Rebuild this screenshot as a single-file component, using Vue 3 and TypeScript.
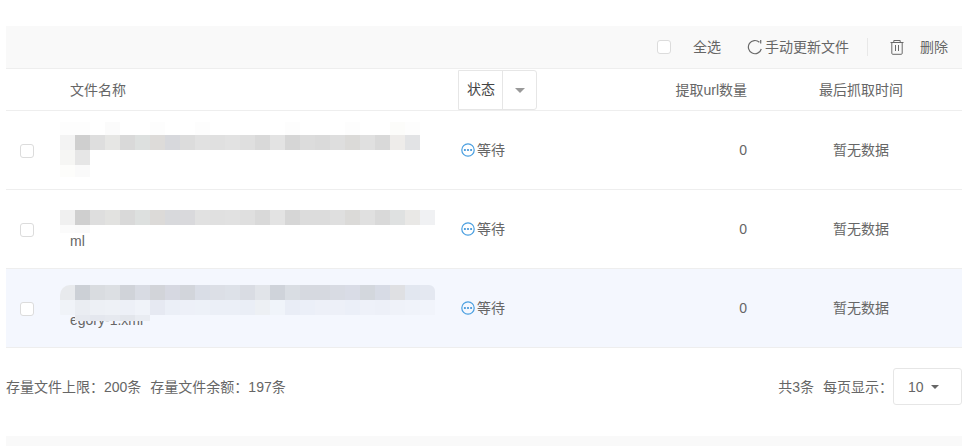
<script setup lang="ts">
interface MosaicRow { h: number; cells: string[] }
interface FileRow { id: number; tail: string; active: boolean; mosaic: MosaicRow[]; top: number }

const g = (s: string): string[] => s.split(' ').map((c) => (c === '-' ? 'transparent' : '#' + c))

const rows: FileRow[] = [
  {
    id: 1, tail: '', active: false, top: 11,
    mosaic: [
      { h: 13, cells: g('fdfdfd fdfdfd - fbfbfb - - fdfdfd - - fdfdfd - - - - - fdfdfd - - - fdfdfd - - fcfcfa fdfdfd') },
      { h: 15, cells: g('f3f3f3 cfcfcf dedede e6e6e4 d9d9d9 dde0df dddbd9 d7d8dc dcdcdc e1e1e1 e0e0e0 e2e2e2 dfdfdf d9d9d9 e3e3e3 d6d6d6 dcdcdc dadada dedede dbdad8 e0e0e0 d9d9d9 eeecea e2e3e5') },
      { h: 15, cells: g('f6f6f4 e6e6e6') },
      { h: 12, cells: g('fdfdfb fafafa') },
    ],
  },
  {
    id: 2, tail: 'ml', active: false, top: 20,
    mosaic: [
      { h: 15, cells: g('f0f0f0 cfcfcf dedede e2e2e0 d9d9d9 dde0df dcdad8 d8d9dc d9d9dc e1e1e1 e0e0e0 e1e1e1 dfdfdf d9d9d9 e3e3e3 d6d6d6 dcdcdc dcdcdc dfdfdf dbdad8 e0e0e0 d9d9d9 dfe1e1 e9e8e6 f0f1f3') },
      { h: 8, cells: g('fbfbfb fafafa') },
    ],
  },
  {
    id: 3, tail: 'egory-1.xml', active: true, top: 16,
    mosaic: [
      { h: 15, cells: g('e8eaed ccd0d6 d9dce0 dcdfe3 d0d3d9 d8dbe3 d2d4d9 d6d8e1 d2d5db d9dde6 dcdfe6 dde1e8 d9dce3 e1e4e9 cfd3da d9dde3 d6d9e0 d6d9e0 d8dbe3 d9dce6 d3d7dd d7dbe5 dfe0e3 e2e7f0 e4e8f1') },
      { h: 15, cells: g('f0f3f8 eaedf2 edf0f5 eef1f6 edf0f7 f0f3f9 e6e9f2 ebeff7 edf0f8 edf1f8 ebeff7 ebeff7 eaeef6 edf0f4 f0f4fa e9edf6 ebeff8 edf0f8 edf0f8 ebeff8 eef1f9 edf0f8 eff2f9 f0f3fa f1f4fb') },
      { h: 6, cells: g('- e6e9ef e4e7ee e6e9ef e3e6ec e9ecf2') },
    ],
  },
]
</script>

<template>
  <div class="page">
    <div class="toolbar">
      <span class="checkbox"></span>
      <span class="select-all raised">全选</span>
      <svg class="refresh" width="16" height="16" viewBox="0 0 16 16" fill="none" stroke="#6a6a6a" stroke-width="1.2">
        <path d="M12.4 3.2A6.6 6.6 0 1 0 14.3 10" />
        <path d="M13.7 1v3.6" />
      </svg>
      <span class="update raised">手动更新文件</span>
      <span class="divider"></span>
      <svg class="trash" width="14" height="16" viewBox="0 0 14 16" fill="none" stroke="#6a6a6a" stroke-width="1">
        <path d="M.5 3.5h13M3.8 3.5V1.5h6.4v2M1.8 3.5v10.8a1 1 0 0 0 1 1h8.4a1 1 0 0 0 1-1V3.5M5.5 6v6M8.5 6v6" />
      </svg>
      <span class="delete raised">删除</span>
    </div>

    <div class="grid head">
      <div></div>
      <div class="raised">文件名称</div>
      <div class="status-head">
        <span class="status-label">状态</span>
        <span class="status-arrow"><i class="caret caret-light"></i></span>
      </div>
      <div class="count raised">提取url数量</div>
      <div class="time raised">最后抓取时间</div>
    </div>

    <div v-for="row in rows" :key="row.id" class="grid row" :class="{ active: row.active }">
      <div class="check-cell"><span class="checkbox"></span></div>
      <div class="name">
        <div class="name-line"></div>
        <div class="name-line">{{ row.tail }}</div>
        <div class="mosaic" :class="{ rounded: row.active }" :style="{ top: row.top + 'px' }">
          <div v-for="(m, i) in row.mosaic" :key="i" class="mosaic-row" :style="{ height: m.h + 'px' }">
            <span v-for="(c, j) in m.cells" :key="j" class="cell" :style="{ background: c }"></span>
          </div>
        </div>
      </div>
      <div class="state">
        <svg width="14" height="14" viewBox="0 0 14 14">
          <circle cx="7" cy="7" r="6.2" fill="none" stroke="#4a9fe0" stroke-width="1.2" />
          <circle cx="3.9" cy="7" r="1.1" fill="#3f94d8" />
          <circle cx="7" cy="7" r="1.1" fill="#3f94d8" />
          <circle cx="10.1" cy="7" r="1.1" fill="#3f94d8" />
        </svg>
        <span class="raised">等待</span>
      </div>
      <div class="count">0</div>
      <div class="time raised">暂无数据</div>
    </div>

    <div class="footer">
      <div class="quota raised">
        <span>存量文件上限：200条</span>
        <span>存量文件余额：197条</span>
      </div>
      <div class="pager">
        <span class="raised">共3条</span>
        <span class="per-page raised">每页显示：</span>
        <div class="page-size"><span>10</span><i class="caret"></i></div>
      </div>
    </div>
    <div class="band"></div>
  </div>
</template>

<style>
html, body { margin: 0; background: #fff; }
</style>

<style scoped>
.page {
  width: 956px;
  height: 446px;
  margin-left: 6px;
  padding-top: 26px;
  box-sizing: border-box;
  overflow: hidden;
  font-family: "Liberation Sans", "Noto Sans CJK SC", sans-serif;
  font-size: 14px;
  color: #666;
}
.raised { padding-bottom: 2px; }
.toolbar {
  height: 42px;
  background: #f9f9f9;
  border-bottom: 1px solid #eeeeee;
  display: flex;
  align-items: center;
  justify-content: flex-end;
  padding-right: 14px;
}
.checkbox {
  display: block;
  width: 14px;
  height: 14px;
  box-sizing: border-box;
  background: #fff;
  border: 1px solid #dcdcdc;
  border-radius: 3px;
}
.select-all { margin-left: 22px; }
.refresh { margin-left: 26px; }
.update { margin-left: 2px; }
.divider { width: 1px; height: 18px; background: #e8e8e8; margin-left: 18px; }
.trash { margin-left: 22px; }
.delete { margin-left: 16px; }
.grid {
  display: grid;
  grid-template-columns: 64px 388px 160px 142px 202px;
  align-items: center;
}
.head {
  height: 41px;
  border-bottom: 1px solid #eeeeee;
}
.status-head {
  display: flex;
  width: 79px;
  height: 40px;
  box-sizing: border-box;
  border: 1px solid #e6e6e6;
  border-radius: 0 3px 3px 0;
  align-self: start;
  margin-top: 1px;
  color: #444;
}
.status-label {
  width: 44px;
  box-sizing: border-box;
  padding-left: 8px;
  line-height: 36px;
  border-right: 1px solid #e6e6e6;
}
.status-arrow {
  flex: 1;
  display: flex;
  align-items: center;
  justify-content: center;
}
.caret {
  display: block;
  width: 0;
  height: 0;
  border-left: 4px solid transparent;
  border-right: 4px solid transparent;
  border-top: 4px solid #666;
}
.caret-light {
  border-left-width: 5px;
  border-right-width: 5px;
  border-top: 5px solid #999;
}
.count { text-align: right; padding-right: 13px; }
.time { text-align: center; }
.row {
  height: 79px;
  box-sizing: border-box;
  border-bottom: 1px solid #eeeeee;
}
.row.active { background: #f4f7fe; }
.check-cell { padding: 2px 0 0 14px; }
.name {
  position: relative;
  align-self: stretch;
  display: flex;
  flex-direction: column;
  justify-content: center;
}
.name-line { height: 24px; line-height: 24px; }
.mosaic {
  position: absolute;
  left: -10px;
}
.mosaic.rounded { border-radius: 10px 6px 0 8px; overflow: hidden; }
.mosaic-row { display: flex; }
.cell { width: 15px; height: 100%; flex: none; }
.state {
  display: flex;
  align-items: center;
  gap: 2px;
  padding-left: 3px;
}
.footer {
  height: 88px;
  box-sizing: border-box;
  padding: 20px 0 31px;
  display: flex;
  justify-content: space-between;
  align-items: center;
}
.quota { display: flex; gap: 9px; }
.pager { display: flex; align-items: center; }
.per-page { margin-left: 9px; }
.page-size {
  width: 69px;
  height: 37px;
  box-sizing: border-box;
  padding-left: 14px;
  border: 1px solid #e6e6e6;
  border-radius: 3px;
  display: flex;
  align-items: center;
  gap: 7px;
}
.band { height: 10px; background: #f9f9f9; }
</style>
